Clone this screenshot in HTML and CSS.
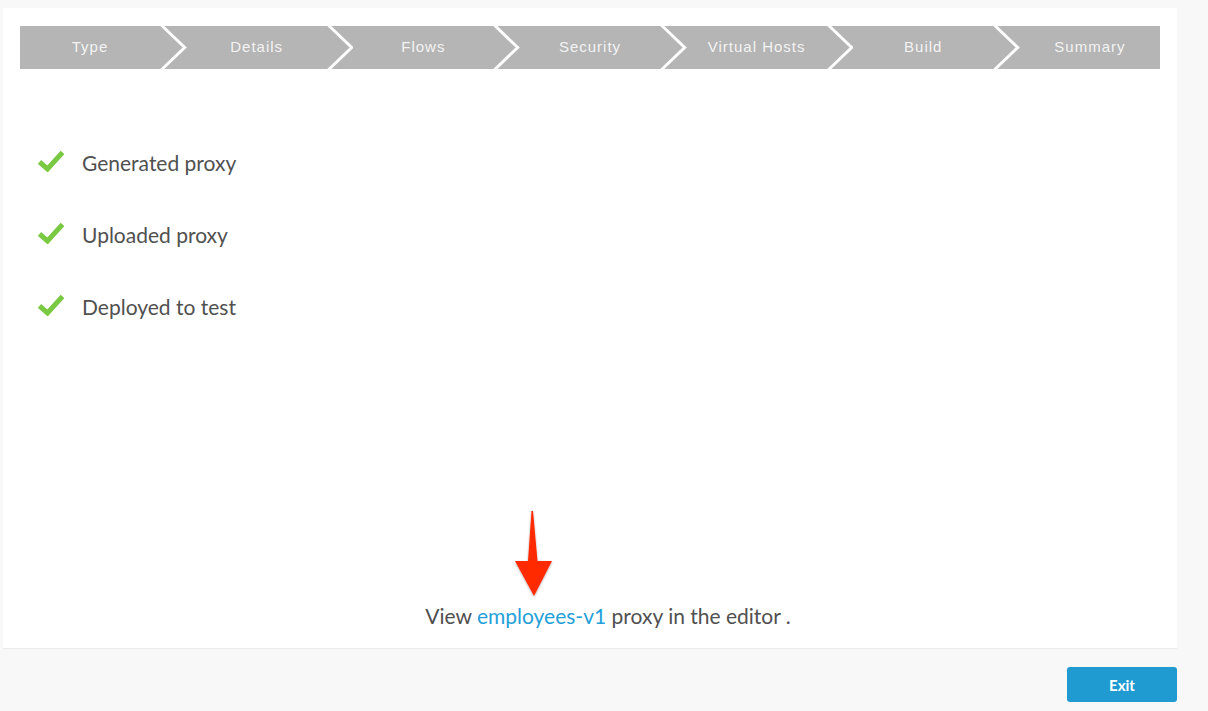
FILE: index.html
```html
<!DOCTYPE html>
<html>
<head>
<meta charset="utf-8">
<link rel="stylesheet" href="styles.css">
</head>
<body>
<div class="panel">
  <div class="stepper">
    <div class="step"><span class="label">Type</span><svg class="chev" viewBox="0 0 27 43"><polyline points="1.5,-1 25,21.5 1.5,44"/></svg></div>
    <div class="step"><span class="label">Details</span><svg class="chev" viewBox="0 0 27 43"><polyline points="1.5,-1 25,21.5 1.5,44"/></svg></div>
    <div class="step"><span class="label">Flows</span><svg class="chev" viewBox="0 0 27 43"><polyline points="1.5,-1 25,21.5 1.5,44"/></svg></div>
    <div class="step"><span class="label">Security</span><svg class="chev" viewBox="0 0 27 43"><polyline points="1.5,-1 25,21.5 1.5,44"/></svg></div>
    <div class="step"><span class="label">Virtual Hosts</span><svg class="chev" viewBox="0 0 27 43"><polyline points="1.5,-1 25,21.5 1.5,44"/></svg></div>
    <div class="step"><span class="label">Build</span><svg class="chev" viewBox="0 0 27 43"><polyline points="1.5,-1 25,21.5 1.5,44"/></svg></div>
    <div class="step last"><span class="label">Summary</span></div>
  </div>

  <ul class="results">
    <li class="result"><svg class="check" viewBox="0 0 26 22"><path d="M1.5,12 L9.5,19 L24.5,2.5"/></svg><span>Generated proxy</span></li>
    <li class="result"><svg class="check" viewBox="0 0 26 22"><path d="M1.5,12 L9.5,19 L24.5,2.5"/></svg><span>Uploaded proxy</span></li>
    <li class="result"><svg class="check" viewBox="0 0 26 22"><path d="M1.5,12 L9.5,19 L24.5,2.5"/></svg><span>Deployed to test</span></li>
  </ul>

  <div class="message">
    <span class="msg-inner">
      <svg class="arrow" viewBox="0 0 40 88">
        <defs>
          <filter id="sh" x="-30%" y="-10%" width="160%" height="130%">
            <feGaussianBlur in="SourceAlpha" stdDeviation="1"/>
            <feOffset dx="0" dy="1"/>
            <feComponentTransfer><feFuncA type="linear" slope="0.35"/></feComponentTransfer>
            <feMerge><feMergeNode/><feMergeNode in="SourceGraphic"/></feMerge>
          </filter>
        </defs>
        <path filter="url(#sh)" d="M17.5,1 L19,1 L23.5,51 L38,51 L20,86 L1,51 L14,51 Z"/>
      </svg>
      View <a class="link" href="#">employees-v1</a> proxy in the editor .
    </span>
  </div>
</div>
<div class="footer">
  <button class="exit">Exit</button>
</div>
</body>
</html>
```

FILE: styles.css
```css
html, body {
  margin: 0;
  padding: 0;
}
body {
  background: #f8f8f8;
  padding: 8px 31px 0 3px;
  font-family: Lato, "Open Sans", sans-serif;
}
.panel {
  background: #ffffff;
  height: 641px;
  border-bottom: 1px solid #ebebeb;
  padding: 18px 17px 0 17px;
  box-sizing: border-box;
  display: flex;
  flex-direction: column;
}
.stepper {
  display: flex;
  height: 43px;
}
.step {
  display: flex;
  flex: 0 0 166.667px;
  background: #b5b5b5;
  height: 43px;
}
.step.last {
  flex: 0 0 140px;
}
.label {
  flex: 0 0 140px;
  text-align: center;
  line-height: 41px;
  font-family: "Liberation Sans", Arial, sans-serif;
  font-size: 15px;
  letter-spacing: 1px;
  color: #f3f3f3;
}
.chev {
  flex: 0 0 26.667px;
  width: 26.667px;
  height: 43px;
  overflow: visible;
}
.chev polyline {
  fill: none;
  stroke: #ffffff;
  stroke-width: 3;
}
.results {
  list-style: none;
  margin: 57px 0 0 0;
  padding: 0 0 0 18px;
}
.result {
  display: flex;
  align-items: center;
  height: 72px;
  font-size: 21px;
  color: #505050;
}
.check {
  width: 26px;
  height: 22px;
  margin-right: 18px;
  margin-top: -2px;
}
.check path {
  fill: none;
  stroke: #7ac943;
  stroke-width: 5;
}
.message {
  margin-top: auto;
  padding: 0 0 20px 36px;
  text-align: center;
  font-size: 21px;
  line-height: 24px;
  color: #505050;
}
.msg-inner {
  position: relative;
}
.link {
  color: #259fd8;
  text-decoration: none;
}
.arrow {
  position: absolute;
  left: 89px;
  top: -93px;
  width: 40px;
  height: 88px;
}
.arrow path {
  fill: #ff2a00;
}
.footer {
  display: flex;
  justify-content: flex-end;
  padding-top: 18px;
}
.exit {
  width: 110px;
  height: 35px;
  border: none;
  border-radius: 3px;
  background: #1f9bd2;
  color: #ffffff;
  font-family: Lato, sans-serif;
  font-weight: bold;
  font-size: 15px;
}
```
